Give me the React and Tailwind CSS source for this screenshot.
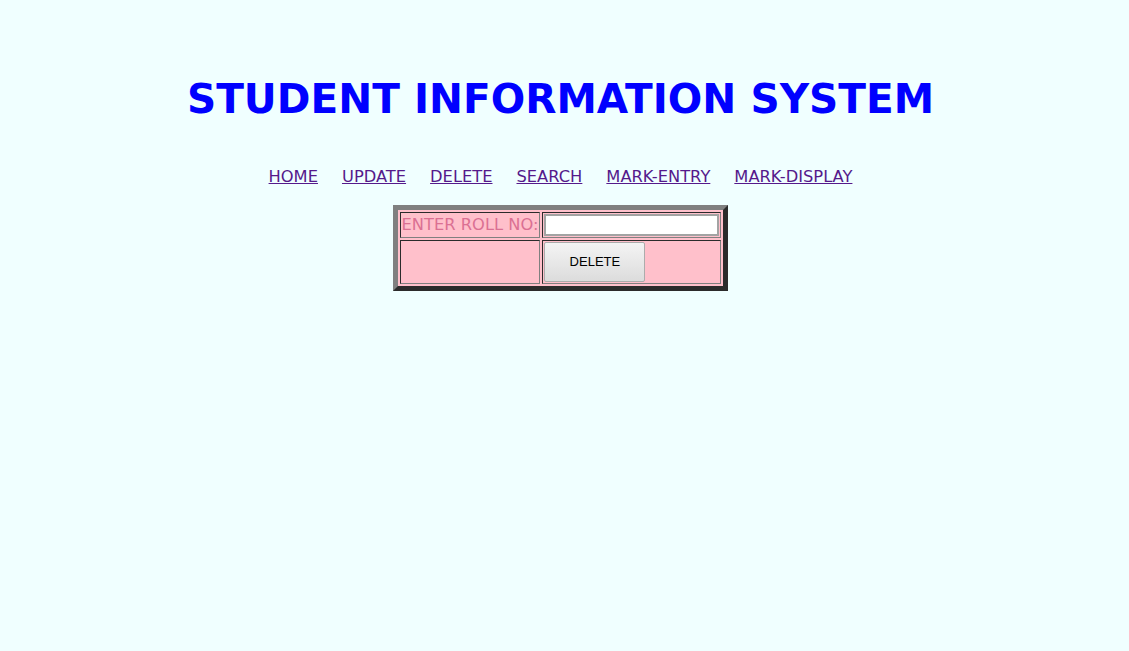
import React, { useState } from "react";

const links = ["HOME", "UPDATE", "DELETE", "SEARCH", "MARK-ENTRY", "MARK-DISPLAY"];

const cell = "p-px border border-t-[#2b2b2b] border-l-[#2b2b2b] border-r-[#808080] border-b-[#808080]";

function App() {
  const [rollNo, setRollNo] = useState("");

  return (
    <div className="min-h-[651px] w-full bg-[#f0ffff] font-['DejaVu_Sans',Verdana,sans-serif]">
      <div className="flex flex-col items-center pt-[75px] pr-[8px]">
        <h1 className="text-[40.6px] leading-[48px] font-bold text-[#0000ff]">
          STUDENT INFORMATION SYSTEM
        </h1>

        {/* menu */}
        <nav className="mt-[44px] flex justify-center gap-[24px] text-[16.3px] leading-[20px]">
          {links.map((l) => (
            <a key={l} href="#" className="text-[#551a8b] underline">
              {l}
            </a>
          ))}
        </nav>

        <form className="mt-[18px]" onSubmit={(e) => e.preventDefault()}>
          <table className="border-separate border-spacing-[2px] bg-[#ffc0cb] border-[5px] border-t-[#808080] border-l-[#808080] border-r-[#2b2b2b] border-b-[#2b2b2b]">
            <tbody>
              <tr>
                <td className={cell + " text-[16.3px] leading-[22px] text-[#db7093] whitespace-nowrap"}>
                  ENTER ROLL NO:
                </td>
                <td className={cell}>
                  <input
                    type="text"
                    value={rollNo}
                    onChange={(e) => setRollNo(e.target.value)}
                    className="block w-[175px] h-[22px] bg-white border-2 border-[#a3a3a3] outline-none text-[13px] px-1"
                  />
                </td>
              </tr>
              <tr>
                <td className={cell}></td>
                <td className={cell}>
                  <button
                    type="submit"
                    className="block w-[101px] h-[40px] rounded-[2px] border border-[#acacac] bg-gradient-to-b from-[#f4f4f4] to-[#dcdcdc] text-[13px] text-black font-['Liberation_Sans',Arial,sans-serif]"
                  >
                    DELETE
                  </button>
                </td>
              </tr>
            </tbody>
          </table>
        </form>
      </div>
    </div>
  );
}

export default App;
